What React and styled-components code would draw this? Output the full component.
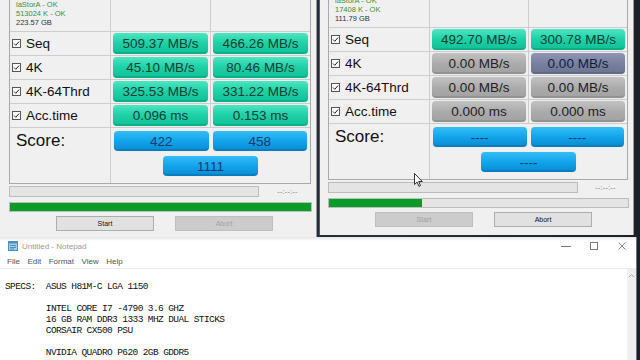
import React from 'react';
import styled, { createGlobalStyle } from 'styled-components';

const GlobalStyle = createGlobalStyle`
  *, *::before, *::after {
    box-sizing: border-box;
  }
  html, body {
    margin: 0;
    padding: 0;
  }
  body {
    width: 640px;
    height: 360px;
    overflow: hidden;
    background: #1c2127;
    font-family: "Liberation Sans", Arial, sans-serif;
  }
`;

const tones = {
  teal: { bg: 'linear-gradient(#4de6c2, #20d2a8 45%, #0fc097)', color: '#1b3b33' },
  gray: { bg: 'linear-gradient(#c2c2c2, #ababab 50%, #a2a2a2)', color: '#1e1e1e' },
  slate: { bg: 'linear-gradient(#9096b4, #7880a0 50%, #6c7494)', color: '#141c36' },
  blue: { bg: 'linear-gradient(#34bdf6, #12a4ea 50%, #0a8ad2)', color: '#173a6e' },
};

const Screen = styled.div`
  position: relative;
  width: 640px;
  height: 360px;
  overflow: hidden;
  display: flex;
  flex-direction: column;
  background: linear-gradient(90deg, #1d2329, #27303a 60%, #1b2026);
`;

const TopRow = styled.div`
  display: flex;
  gap: 2px;
  height: 237px;
  align-items: flex-start;
`;

const Window = styled.div`
  width: ${({ $width }) => $width}px;
  background: #f0f0f0;
  border-right: 1px solid #9a9a9a;
  border-left: ${({ $active }) => ($active ? '1px solid #4d5a6a' : 'none')};
  padding: 0 0 8px ${({ $padLeft }) => $padLeft}px;
`;

const Table = styled.div`
  width: ${({ $width }) => $width}px;
  border: 1px solid #a9a9a9;
  border-top: none;
  display: grid;
  grid-template-columns: 100px 1fr 1fr;
`;

const InfoCell = styled.div`
  height: ${({ $height }) => $height}px;
  overflow: hidden;
  display: flex;
  flex-direction: column;
  justify-content: flex-end;
  padding: 0 0 4px 6px;
  font-size: 7.5px;
  line-height: 9px;
`;

const InfoLine = styled.div`
  color: ${({ $ok }) => ($ok ? '#3f8f34' : '#333')};
  white-space: nowrap;
`;

const BlankCell = styled.div`
  border-left: 1px solid #cdcdcd;
`;

const LabelCell = styled.div`
  height: 24px;
  border-top: 1px solid #cdcdcd;
  display: flex;
  align-items: center;
  gap: 5px;
  padding-left: 2px;
  font-size: 13.5px;
  color: #111;
  white-space: nowrap;
`;

const ValueCell = styled.div`
  height: 24px;
  border-top: 1px solid #cdcdcd;
  border-left: 1px solid #cdcdcd;
  padding: 1px 2px 1px 2px;
`;

const Pill = styled.div`
  height: ${({ $h }) => $h || 21}px;
  width: ${({ $w }) => ($w ? `${$w}px` : 'auto')};
  border-radius: 4px;
  display: flex;
  align-items: center;
  justify-content: center;
  font-size: 13.5px;
  white-space: nowrap;
  background: ${({ $tone }) => tones[$tone].bg};
  color: ${({ $tone }) => tones[$tone].color};
  box-shadow: inset 0 -2px 0 rgba(0, 0, 0, 0.1), 0 0 1px rgba(0, 0, 0, 0.15);
`;

const ScoreLabel = styled.div`
  height: 56px;
  border-top: 1px solid #cdcdcd;
  padding: 3px 0 0 6px;
  font-size: 17px;
  color: #111;
`;

const ScoreArea = styled.div`
  grid-column: 2 / 4;
  height: 56px;
  border-top: 1px solid #cdcdcd;
  border-left: 1px solid #cdcdcd;
  padding: 3px 3px 0 3px;
  display: flex;
  flex-direction: column;
  align-items: center;
  gap: 5px;
`;

const ScorePair = styled.div`
  align-self: stretch;
  display: grid;
  grid-template-columns: 1fr 1fr;
  gap: 4px;
`;

const ProgressRow = styled.div`
  display: flex;
  align-items: center;
  margin-top: 2px;
  height: 11px;
`;

const ProgressTrack = styled.div`
  width: ${({ $w }) => ($w ? `${$w}px` : '100%')};
  height: ${({ $h }) => $h}px;
  background: #e4e4e4;
  border: 1px solid #bcbcbc;
  margin-top: ${({ $mt }) => $mt || 0}px;
`;

const ProgressFill = styled.div`
  height: 100%;
  background: #0a9c28;
`;

const Clock = styled.div`
  flex: 1;
  text-align: center;
  font-size: 7px;
  color: #777;
  letter-spacing: 0.3px;
`;

const ButtonRow = styled.div`
  display: flex;
  gap: 21px;
  margin-top: 4px;
  padding-left: 47px;
`;

const Button = styled.div`
  width: 98px;
  height: 15px;
  display: flex;
  align-items: center;
  justify-content: center;
  font-size: 7px;
  background: ${({ $disabled }) => ($disabled ? '#cccccc' : '#e1e1e1')};
  border: 1px solid ${({ $disabled }) => ($disabled ? '#bfbfbf' : '#adadad')};
  color: ${({ $disabled }) => ($disabled ? '#a2a2a2' : '#111')};
`;

const Notepad = styled.div`
  width: 637px;
  flex: 1;
  display: flex;
  flex-direction: column;
  background: #fff;
  border-right: 1px solid #6c7680;
`;

const TitleBar = styled.div`
  height: 18px;
  display: flex;
  align-items: center;
  padding-left: 8px;
  background: linear-gradient(#e4e4e4, #fff 4px);
`;

const Title = styled.span`
  margin-left: 4px;
  font-size: 8px;
  color: #9a9a9a;
`;

const Controls = styled.div`
  margin-left: auto;
  display: flex;
  height: 100%;
`;

const Control = styled.div`
  width: 28px;
  display: flex;
  align-items: center;
  justify-content: center;
`;

const MenuBar = styled.div`
  height: 14px;
  display: flex;
  align-items: center;
  gap: 7.5px;
  padding-left: 7px;
  font-size: 8px;
  color: #555;
  border-bottom: 1px solid #ececec;
`;

const Body = styled.div`
  flex: 1;
  display: flex;
`;

const TextArea = styled.pre`
  flex: 1;
  margin: 0;
  padding: 12px 0 0 5px;
  font-family: "Liberation Mono", "DejaVu Sans Mono", monospace;
  font-size: 9.5px;
  letter-spacing: -0.6px;
  line-height: 11px;
  tab-size: 8;
  color: #111;
`;

const Scrollbar = styled.div`
  width: 9px;
  background: #f0f0f0;
  display: flex;
  justify-content: center;
  padding-top: 4px;
`;

const Cursor = styled.svg`
  position: absolute;
  left: 414px;
  top: 173px;
`;

const CheckBox = () => (
  <svg width="9" height="9" viewBox="0 0 9 9">
    <rect x="0.5" y="0.5" width="8" height="8" fill="#fff" stroke="#555" />
    <path d="M2 4.5 L3.8 6.3 L7 2.6" fill="none" stroke="#222" strokeWidth="1" />
  </svg>
);

function Benchmark({ width, padLeft, tableWidth, infoHeight, active, info, rows, scores, progress, startDisabled, abortDisabled }) {
  return (
    <Window $width={width} $padLeft={padLeft} $active={active}>
      <Table $width={tableWidth}>
        <InfoCell $height={infoHeight}>
          <InfoLine $ok>{info[0]}</InfoLine>
          <InfoLine $ok>{info[1]}</InfoLine>
          <InfoLine>{info[2]}</InfoLine>
        </InfoCell>
        <BlankCell />
        <BlankCell />
        {rows.map((r) => (
          <React.Fragment key={r.label}>
            <LabelCell>
              <CheckBox />
              {r.label}
            </LabelCell>
            <ValueCell>
              <Pill $tone={r.read[1]}>{r.read[0]}</Pill>
            </ValueCell>
            <ValueCell>
              <Pill $tone={r.write[1]}>{r.write[0]}</Pill>
            </ValueCell>
          </React.Fragment>
        ))}
        <ScoreLabel>Score:</ScoreLabel>
        <ScoreArea>
          <ScorePair>
            <Pill $tone="blue" $h={20}>{scores[0]}</Pill>
            <Pill $tone="blue" $h={20}>{scores[1]}</Pill>
          </ScorePair>
          <Pill $tone="blue" $h={20} $w={95}>{scores[2]}</Pill>
        </ScoreArea>
      </Table>
      <ProgressRow>
        <ProgressTrack $w={250} $h={11} />
        <Clock>--:--:--</Clock>
      </ProgressRow>
      <ProgressTrack $w={tableWidth + 1} $h={10} $mt={5}>
        <ProgressFill style={{ width: `${progress}%` }} />
      </ProgressTrack>
      <ButtonRow>
        <Button $disabled={startDisabled}>Start</Button>
        <Button $disabled={abortDisabled}>Abort</Button>
      </ButtonRow>
    </Window>
  );
}

const leftRows = [
  { label: 'Seq', read: ['509.37 MB/s', 'teal'], write: ['466.26 MB/s', 'teal'] },
  { label: '4K', read: ['45.10 MB/s', 'teal'], write: ['80.46 MB/s', 'teal'] },
  { label: '4K-64Thrd', read: ['325.53 MB/s', 'teal'], write: ['331.22 MB/s', 'teal'] },
  { label: 'Acc.time', read: ['0.096 ms', 'teal'], write: ['0.153 ms', 'teal'] },
];

const rightRows = [
  { label: 'Seq', read: ['492.70 MB/s', 'teal'], write: ['300.78 MB/s', 'teal'] },
  { label: '4K', read: ['0.00 MB/s', 'gray'], write: ['0.00 MB/s', 'slate'] },
  { label: '4K-64Thrd', read: ['0.00 MB/s', 'gray'], write: ['0.00 MB/s', 'gray'] },
  { label: 'Acc.time', read: ['0.000 ms', 'gray'], write: ['0.000 ms', 'gray'] },
];

const notes = `SPECS:\tASUS H81M-C LGA 1150

\tINTEL CORE I7 -4790 3.6 GHZ
\t16 GB RAM DDR3 1333 MHZ DUAL STICKS
\tCORSAIR CX500 PSU

\tNVIDIA QUADRO P620 2GB GDDR5`;

export default function App() {
  return (
    <>
      <GlobalStyle />
      <Screen>
        <TopRow>
          <Benchmark
            width={317}
            padLeft={9}
            tableWidth={302}
            infoHeight={31}
            info={['iaStorA - OK', '513024 K - OK', '223.57 GB']}
            rows={leftRows}
            scores={['422', '458', '1111']}
            progress={100}
            abortDisabled
          />
          <Benchmark
            active
            width={315}
            padLeft={8}
            tableWidth={300}
            infoHeight={27}
            info={['iaStorA - OK', '17408 K - OK', '111.79 GB']}
            rows={rightRows}
            scores={['----', '----', '----']}
            progress={31}
            startDisabled
          />
        </TopRow>
        <Notepad>
          <TitleBar>
            <svg width="10" height="10" viewBox="0 0 10 10">
              <rect x="0.5" y="0.5" width="9" height="9" fill="#9fd0ee" stroke="#4e8fc0" />
              <rect x="0.5" y="0.5" width="9" height="2" fill="#4e8fc0" />
              <path d="M2 4.5h6M2 6.5h6M2 8h4" stroke="#3a6e96" strokeWidth="0.7" />
            </svg>
            <Title>Untitled - Notepad</Title>
            <Controls>
              <Control>
                <svg width="10" height="10" viewBox="0 0 10 10">
                  <path d="M0 5.5h10" stroke="#777" strokeWidth="1" />
                </svg>
              </Control>
              <Control>
                <svg width="10" height="10" viewBox="0 0 10 10">
                  <rect x="1.5" y="1.5" width="7" height="7" fill="none" stroke="#777" />
                </svg>
              </Control>
              <Control>
                <svg width="10" height="10" viewBox="0 0 10 10">
                  <path d="M1.5 1.5l7 7M8.5 1.5l-7 7" stroke="#777" strokeWidth="0.9" />
                </svg>
              </Control>
            </Controls>
          </TitleBar>
          <MenuBar>
            <span>File</span>
            <span>Edit</span>
            <span>Format</span>
            <span>View</span>
            <span>Help</span>
          </MenuBar>
          <Body>
            <TextArea>{notes}</TextArea>
            <Scrollbar>
              <svg width="7" height="5" viewBox="0 0 7 5">
                <path d="M1 4l2.5-2.5L6 4" fill="none" stroke="#aaa" strokeWidth="1" />
              </svg>
            </Scrollbar>
          </Body>
        </Notepad>
        <Cursor width="9" height="14" viewBox="0 0 9 14">
          <path d="M0.5 0.5v11l2.6-2.4 1.8 4.2 1.6-0.7-1.8-4.1h3.6z" fill="#fff" stroke="#000" strokeWidth="0.8" />
        </Cursor>
      </Screen>
    </>
  );
}
